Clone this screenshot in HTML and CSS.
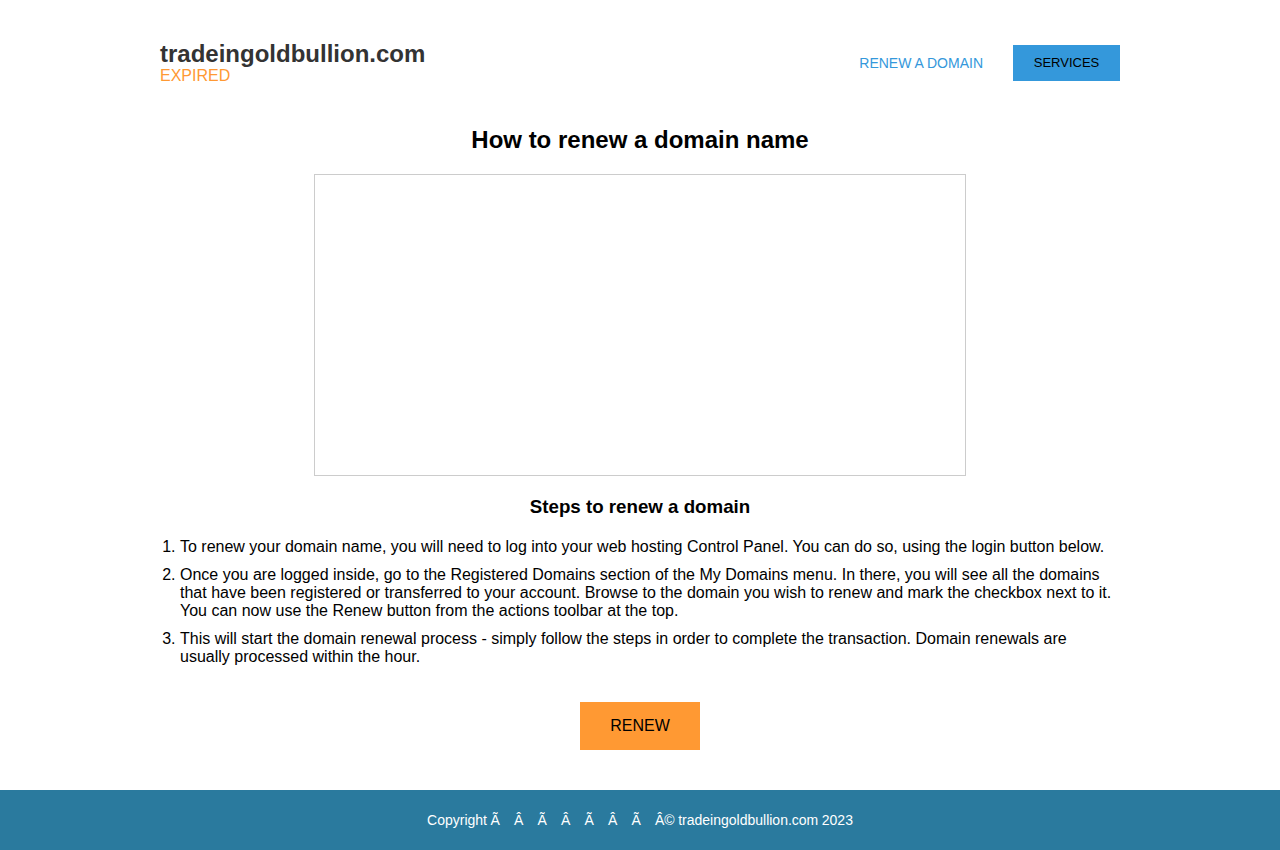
FILE: index.html
```html
<!DOCTYPE html>
<html lang="en">
<head>
<meta charset="utf-8">
<title>tradeingoldbullion.com - Expired</title>
<link rel="stylesheet" href="styles.css">
</head>
<body>
<div class="page">
  <header class="header">
    <div class="brand">
      <div class="domain">tradeingoldbullion.com</div>
      <div class="status">EXPIRED</div>
    </div>
    <nav class="nav">
      <a class="nav-link" href="#">RENEW A DOMAIN</a>
      <a class="nav-button" href="#">SERVICES</a>
    </nav>
  </header>
  <main class="main">
    <h1 class="title">How to renew a domain name</h1>
    <div class="video"></div>
    <h3 class="subtitle">Steps to renew a domain</h3>
    <ol class="steps">
      <li>To renew your domain name, you will need to log into your web hosting Control Panel. You can do so, using the login button below.</li>
      <li>Once you are logged inside, go to the Registered Domains section of the My Domains menu. In there, you will see all the domains that have been registered or transferred to your account. Browse to the domain you wish to renew and mark the checkbox next to it. You can now use the Renew button from the actions toolbar at the top.</li>
      <li>This will start the domain renewal process - simply follow the steps in order to complete the transaction. Domain renewals are usually processed within the hour.</li>
    </ol>
    <div class="action">
      <a class="renew" href="#">RENEW</a>
    </div>
  </main>
</div>
<footer class="footer">Copyright Ã&nbsp;&nbsp;&nbsp; Â&nbsp;&nbsp;&nbsp; Ã&nbsp;&nbsp;&nbsp; Â&nbsp;&nbsp;&nbsp; Ã&nbsp;&nbsp;&nbsp; Â&nbsp;&nbsp;&nbsp; Ã&nbsp;&nbsp;&nbsp; Â© tradeingoldbullion.com 2023</footer>
</body>
</html>
```

FILE: styles.css
```css
* { box-sizing: border-box; }
html, body { margin: 0; padding: 0; }
body {
  font-family: "Liberation Sans", Arial, sans-serif;
  color: #000;
  background: #fff;
}
.page {
  width: 960px;
  margin: 0 auto;
  padding-top: 40px;
}
.header {
  display: flex;
  justify-content: space-between;
  align-items: flex-start;
}
.domain {
  font-size: 24px;
  font-weight: bold;
  color: #333;
  line-height: 28px;
}
.status {
  font-size: 16px;
  color: #ff9933;
  line-height: 16px;
}
.nav {
  display: flex;
  align-items: center;
  gap: 30px;
  margin-top: 5px;
}
.nav-link {
  font-size: 14px;
  color: #3498db;
  text-decoration: none;
}
.nav-button {
  display: block;
  width: 107px;
  height: 36px;
  line-height: 36px;
  text-align: center;
  background: #3498db;
  color: #000;
  font-size: 13px;
  text-decoration: none;
}
.main {
  padding-top: 42px;
  padding-bottom: 40px;
}
.title {
  margin: 0;
  text-align: center;
  font-size: 24px;
  line-height: 28px;
  font-weight: bold;
}
.video {
  width: 652px;
  height: 302px;
  margin: 20px auto 0;
  border: 1px solid #ccc;
}
.subtitle {
  margin: 19px 0 0;
  text-align: center;
  font-size: 18.72px;
  line-height: 24px;
  font-weight: bold;
}
.steps {
  margin: 19px 0 0;
  padding-left: 20px;
  font-size: 16px;
  line-height: 18px;
}
.steps li { margin-bottom: 10px; }
.steps li:last-child { margin-bottom: 0; }
.action {
  display: flex;
  justify-content: center;
  margin-top: 36px;
}
.renew {
  display: block;
  width: 120px;
  height: 48px;
  line-height: 48px;
  text-align: center;
  background: #ff9933;
  color: #000;
  font-size: 16px;
  text-decoration: none;
}
.footer {
  height: 60px;
  line-height: 60px;
  background: #2a7a9e;
  color: #fff;
  text-align: center;
  font-size: 14px;
  word-spacing: -0.35px;
}
```
